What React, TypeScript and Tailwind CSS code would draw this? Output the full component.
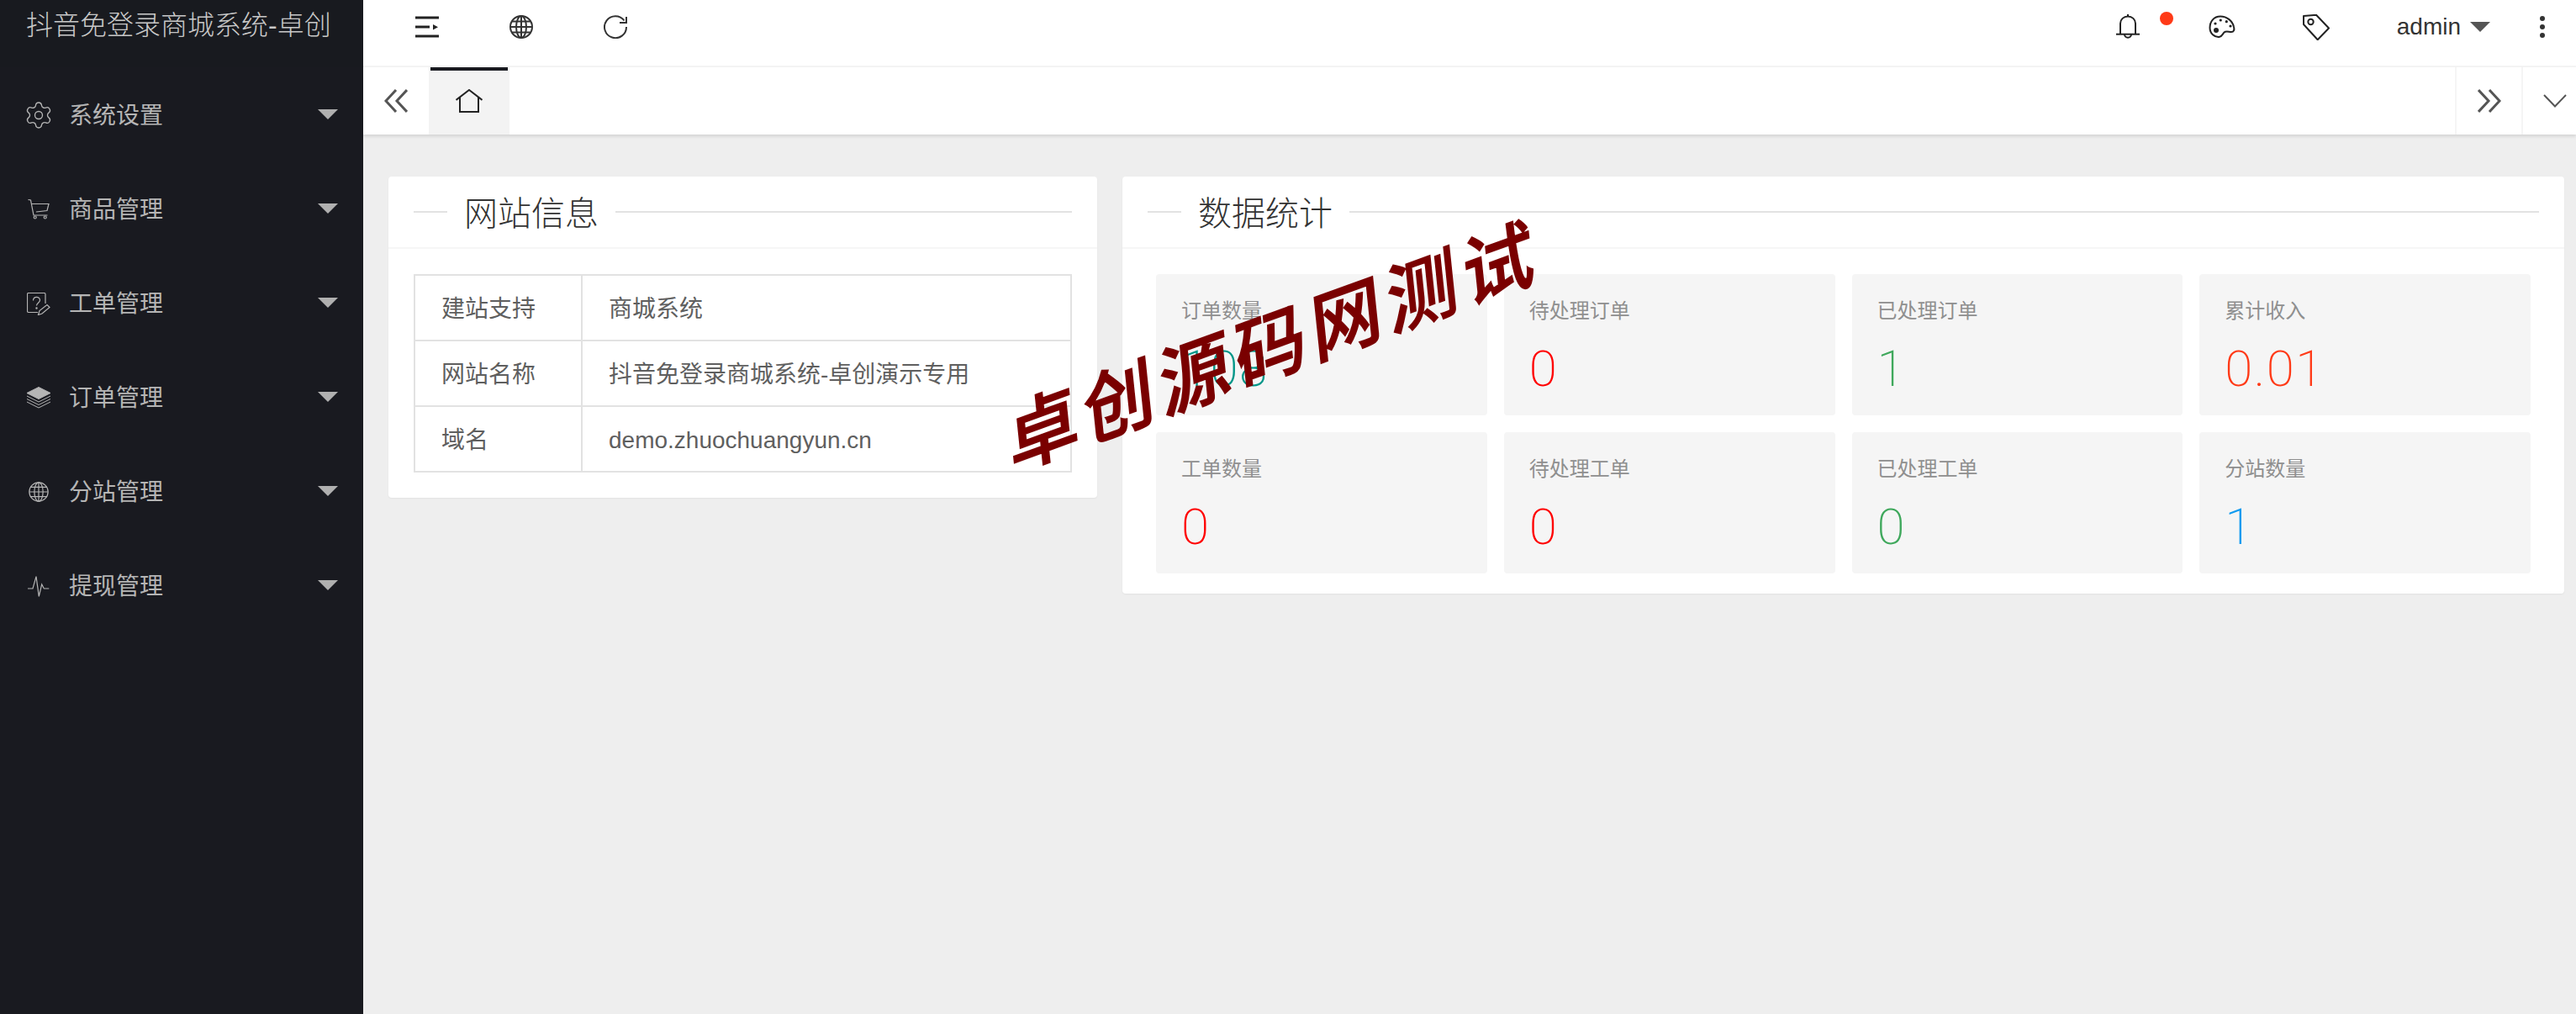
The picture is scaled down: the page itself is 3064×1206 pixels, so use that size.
import type { ReactNode } from "react";
import { Settings } from "lucide-react";

const menuItems: { label: string; icon: ReactNode }[] = [
  { label: "系统设置", icon: <Settings size={36} strokeWidth={0.9} className="shrink-0" /> },
  { label: "商品管理", icon: <CartIcon /> },
  { label: "工单管理", icon: <FormIcon /> },
  { label: "订单管理", icon: <LayersIcon /> },
  { label: "分站管理", icon: <GlobeIcon size={24} width={1.2} /> },
  { label: "提现管理", icon: <PulseIcon /> },
];

const siteRows = [
  ["建站支持", "商城系统"],
  ["网站名称", "抖音免登录商城系统-卓创演示专用"],
  ["域名", "demo.zhuochuangyun.cn"],
];

const stats = [
  { label: "订单数量", value: "108", color: "text-[#009688]" },
  { label: "待处理订单", value: "0", color: "text-[#ff0000]" },
  { label: "已处理订单", value: "1", color: "text-[#3fa85c]" },
  { label: "累计收入", value: "0.01", color: "text-[#ff3a17]" },
  { label: "工单数量", value: "0", color: "text-[#ff0000]" },
  { label: "待处理工单", value: "0", color: "text-[#ff0000]" },
  { label: "已处理工单", value: "0", color: "text-[#3fa85c]" },
  { label: "分站数量", value: "1", color: "text-[#0f9aef]" },
];

function CartIcon() {
  return (
    <svg width="26" height="24" viewBox="0 0 26 24" fill="none" stroke="currentColor" strokeWidth="1.2">
      <path d="M0.5 0.5L3.5 1L7 19H23.5" />
      <path d="M5 5.5H25L23 13.5L10 15" />
      <circle cx="8.7" cy="21.5" r="1.5" />
      <circle cx="20.7" cy="21.5" r="1.5" />
    </svg>
  );
}

function FormIcon() {
  return (
    <svg width="28" height="27" viewBox="0 0 28 27" fill="none" stroke="currentColor" strokeWidth="1.2">
      <path d="M22 13V2Q22 0.5 20.5 0.5H2Q0.5 0.5 0.5 2V22Q0.5 23.5 2 23.5H13" />
      <path d="M7.5 9.5C7.5 4 15.5 4 15.5 9C15.5 12 11.5 12.5 11.5 15.5" />
      <circle cx="11.5" cy="18.5" r="0.6" />
      <path d="M13.5 26.5L15 21.5L24 14.5L27 17.5L18 25Z" />
    </svg>
  );
}

function LayersIcon() {
  return (
    <svg width="28" height="26" viewBox="0 0 28 26" fill="none" stroke="currentColor" strokeWidth="1">
      <path d="M14 0.5L28 7.5L14 14.5L0 7.5Z" fill="currentColor" />
      <path d="M0 11L14 18L28 11" />
      <path d="M0 14.5L14 21.5L28 14.5" />
      <path d="M0 18L14 25L28 18" />
    </svg>
  );
}

function GlobeIcon({ size = 28, width = 2 }: { size?: number; width?: number }) {
  return (
    <svg width={size} height={size} viewBox="0 0 28 28" fill="none" stroke="currentColor" strokeWidth={width * (28 / size)}>
      <circle cx="14" cy="14" r="13" />
      <ellipse cx="14" cy="14" rx="6" ry="13" />
      <path d="M14 1V27M1 14H27M3 7.5H25M3 20.5H25" />
    </svg>
  );
}

function PulseIcon() {
  return (
    <svg width="26" height="25" viewBox="0 0 26 25" fill="none" stroke="currentColor" strokeWidth="1.2">
      <path d="M0 15H6L10 0.7L13.3 24.3L16.7 10L19.3 15H25.3" />
    </svg>
  );
}

function MenuFoldIcon() {
  return (
    <svg width="28" height="28" viewBox="0 0 28 28" fill="#222" stroke="#222" strokeWidth="3">
      <path d="M0 3H28M0 14H17M0 25H28" />
      <path d="M21 11L27 14.3L21 17.6Z" stroke="none" />
    </svg>
  );
}

function RefreshIcon() {
  return (
    <svg width="28" height="28" viewBox="0 0 28 28" fill="none" stroke="#333" strokeWidth="2">
      <path d="M24.5 6.5A13 13 0 1 0 27 14" />
      <path d="M27 2V9H19" />
    </svg>
  );
}

function BellIcon() {
  return (
    <svg width="28" height="28" viewBox="0 0 28 28" fill="none" stroke="#222" strokeWidth="2" className="overflow-visible">
      <path d="M5 22.7V10C5 5 9 1.5 14 1.5C19 1.5 23 5 23 10V22.7" />
      <path d="M0 22.7H28" />
      <path d="M10 22.7a4 4 0 0 0 8 0" />
      <path d="M14 -1V1.5" />
    </svg>
  );
}

function PaletteIcon() {
  return (
    <svg width="32" height="28" viewBox="0 0 32 28" fill="none" stroke="#222" strokeWidth="2">
      <path d="M14 1.5C6 1.5 1.5 8 1.5 15C1.5 22 7 26.5 12.5 26C16 25.7 16.5 22.5 18.5 20.5C20.5 18.5 24 20 27 20C30 20 31 17.5 30 14C28.5 7 22 1.5 14 1.5Z" />
      <g fill="#222" stroke="none">
        <circle cx="9" cy="18" r="3" />
        <circle cx="8" cy="10" r="1.6" />
        <circle cx="14.3" cy="6" r="1.6" />
        <circle cx="21.3" cy="7.7" r="1.6" />
        <circle cx="26" cy="13" r="1.6" />
      </g>
    </svg>
  );
}

function TagIcon() {
  return (
    <svg width="32" height="31" viewBox="0 0 32 31" fill="none" stroke="#222" strokeWidth="2" strokeLinejoin="round">
      <path d="M1 2L16 0.8L31 16.5L17.7 30.2L1 12Z" />
      <circle cx="9.5" cy="9" r="3.2" />
    </svg>
  );
}

function HomeIcon() {
  return (
    <svg width="32" height="28" viewBox="0 0 32 28" fill="none" stroke="#222" strokeWidth="2">
      <path d="M0.5 13L16 1L31.5 13" />
      <path d="M5 9.5V27H27V9.5" />
    </svg>
  );
}

function Chevrons({ flip }: { flip?: boolean }) {
  return (
    <svg width="28" height="28" viewBox="0 0 28 28" fill="none" stroke="#555" strokeWidth="3" className={flip ? "rotate-180" : ""}>
      <path d="M14 1L2 14L14 27" />
      <path d="M27 1L15 14L27 27" />
    </svg>
  );
}

function ChevronDown() {
  return (
    <svg width="28" height="16" viewBox="0 0 28 16" fill="none" stroke="#555" strokeWidth="2">
      <path d="M1 1L14 14.5L27 1" />
    </svg>
  );
}

function CardTitle({ title }: { title: string }) {
  return (
    <div className="flex h-[86px] items-center border-b-2 border-[#f6f6f6] px-[30px]">
      <span className="h-[2px] w-10 bg-[#e2e2e2]" />
      <span className="px-5 pt-[3px] text-[40px] leading-none font-light text-[#333]">{title}</span>
      <span className="h-[2px] flex-1 bg-[#e2e2e2]" />
    </div>
  );
}

export default function App() {
  return (
    <div className="relative flex h-[1206px] w-[3064px] overflow-hidden bg-[#eeeeee] font-['Liberation_Sans','Noto_Sans_CJK_SC',sans-serif]">
      <aside className="w-[432px] shrink-0 bg-[#191a20] text-[#b5b5b5]">
        <div className="h-[80px] bg-[#181a1f] pl-[31px] text-[32px] leading-[60px] font-light whitespace-nowrap text-[#c8c8c8]">
          抖音免登录商城系统-卓创
        </div>
        {menuItems.map((item) => (
          <div key={item.label} className="flex h-[112px] items-center pr-[30px] pl-[32px]">
            <span className="flex w-[28px] justify-center pt-[2px]">{item.icon}</span>
            <span className="ml-[22px] pt-[3px] text-[28px]">{item.label}</span>
            <span className="ml-auto h-0 w-0 border-x-[12px] border-t-[12px] border-x-transparent border-t-[#b0b0b0]" />
          </div>
        ))}
      </aside>

      <div className="flex min-w-0 flex-1 flex-col">
        <header className="flex h-[80px] shrink-0 justify-between border-b-2 border-[#f5f5f5] bg-white pl-5">
          <div className="flex h-[64px]">
            <span className="flex w-[112px] items-center justify-center"><MenuFoldIcon /></span>
            <span className="flex w-[112px] items-center justify-center text-[#333]"><GlobeIcon /></span>
            <span className="flex w-[112px] items-center justify-center"><RefreshIcon /></span>
          </div>
          <div className="flex h-[64px]">
            <span className="relative flex w-[112px] items-center justify-center">
              <BellIcon />
              <span className="absolute top-[14px] left-[94px] h-4 w-4 rounded-full bg-[#ff3a17]" />
            </span>
            <span className="flex w-[112px] items-center justify-center"><PaletteIcon /></span>
            <span className="flex w-[112px] items-center justify-center"><TagIcon /></span>
            <span className="ml-10 flex items-center text-[28px] text-[#333]">
              admin
              <span className="ml-[11px] h-0 w-0 border-x-[12px] border-t-[12px] border-x-transparent border-t-[#555]" />
            </span>
            <span className="ml-[22px] flex w-[80px] flex-col items-center justify-center gap-1">
              <span className="h-[6px] w-[6px] rounded-full bg-[#333]" />
              <span className="h-[6px] w-[6px] rounded-full bg-[#333]" />
              <span className="h-[6px] w-[6px] rounded-full bg-[#333]" />
            </span>
          </div>
        </header>

        <div className="flex h-[80px] shrink-0 bg-white shadow-[0_2px_4px_rgba(0,0,0,0.12)]">
          <span className="flex w-[78px] items-center justify-center"><Chevrons /></span>
          <div className="flex w-[96px] items-center justify-center bg-[#f3f3f3]">
            <div className="relative flex h-full w-full items-center justify-center">
              <span className="absolute top-0 left-[2px] h-1 w-[92px] bg-[#191a20]" />
              <HomeIcon />
            </div>
          </div>
          <div className="flex-1" />
          <span className="flex w-[79px] items-center justify-center border-l-2 border-[#f5f5f5]"><Chevrons flip /></span>
          <span className="flex w-[65px] items-center border-l-2 border-[#f5f5f5] pl-6"><ChevronDown /></span>
        </div>

        <main className="flex items-start gap-[30px] pt-[50px] pr-[14px] pl-[30px]">
          <section className="w-[843px] shrink-0 rounded-[4px] bg-white shadow-[0_1px_2px_rgba(0,0,0,0.05)]">
            <CardTitle title="网站信息" />
            <div className="p-[30px]">
              <table className="w-full table-fixed border-collapse text-[28px] text-[#5f5f5f]">
                <tbody>
                  {siteRows.map(([name, value]) => (
                    <tr key={name} className="h-[78px]">
                      <td className="w-[199px] border-2 border-[#e2e2e2] px-[31px] pt-[3px]">{name}</td>
                      <td className="border-2 border-[#e2e2e2] px-[31px] pt-[3px]">{value}</td>
                    </tr>
                  ))}
                </tbody>
              </table>
            </div>
          </section>

          <section className="min-w-0 flex-1 rounded-[4px] bg-white shadow-[0_1px_2px_rgba(0,0,0,0.05)]">
            <CardTitle title="数据统计" />
            <div className="grid grid-cols-4 gap-5 px-10 pt-[30px] pb-6">
              {stats.map((stat) => (
                <div key={stat.label} className="h-[168px] rounded-[4px] bg-[#f5f5f5] px-[30px] pt-[28px]">
                  <div className="text-[24px] leading-[32px] text-[#8f8f8f]">{stat.label}</div>
                  <div className={`mt-[23px] font-['Roboto','Liberation_Sans',sans-serif] text-[60px] leading-[60px] font-extralight tracking-[1.5px] ${stat.color}`}>
                    {stat.value}
                  </div>
                </div>
              ))}
            </div>
          </section>
        </main>
      </div>

      <div className="absolute top-[353px] left-[1172px] w-[687px] -rotate-[20deg] text-[88px] leading-[120px] font-medium tracking-[8px] whitespace-nowrap text-[#7a0000] italic [-webkit-text-stroke:1.5px_#7a0000]">
        卓创源码网测试
      </div>
    </div>
  );
}
